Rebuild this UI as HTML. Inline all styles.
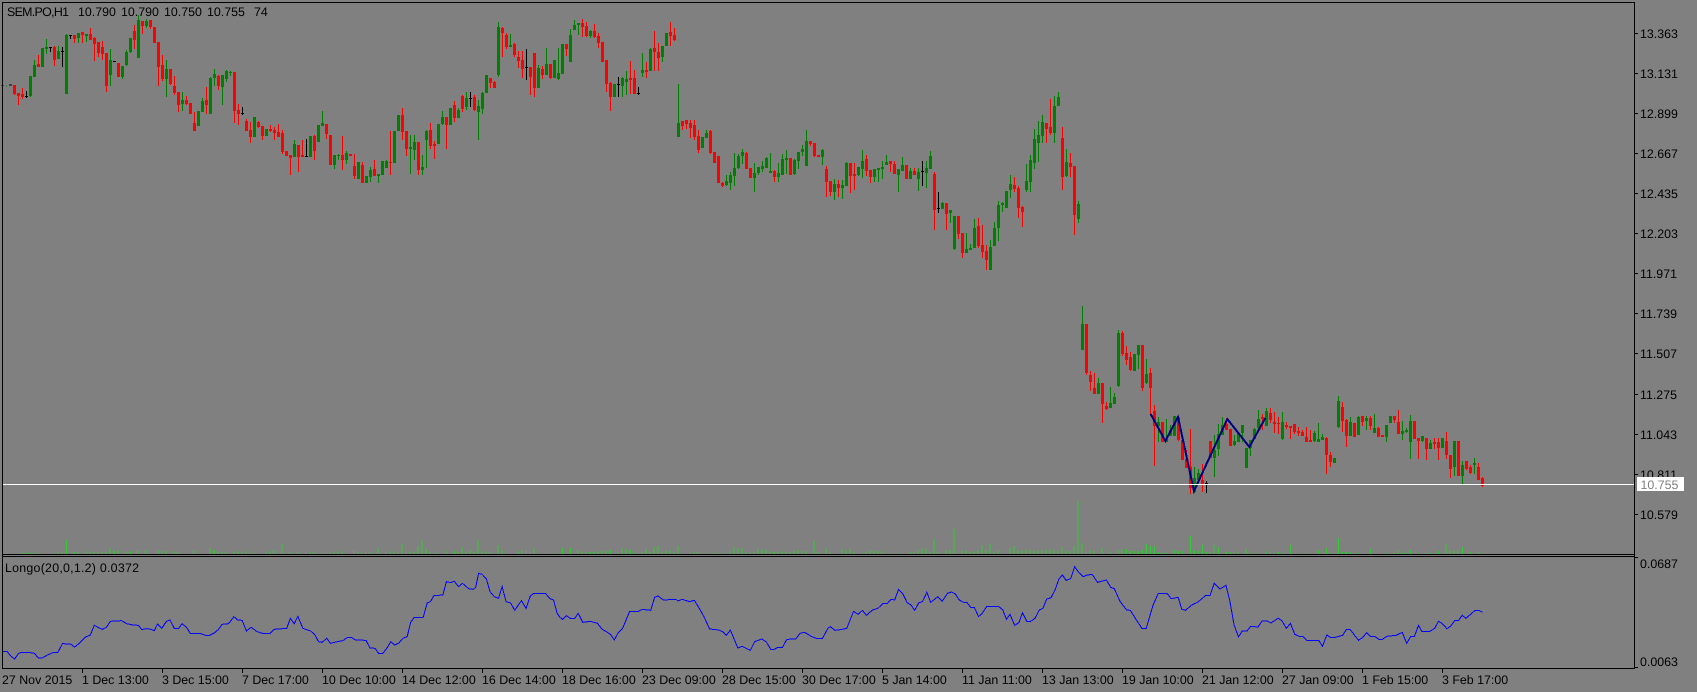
<!DOCTYPE html>
<html><head><meta charset="utf-8"><title>SEM.PO,H1</title>
<style>
html,body{margin:0;padding:0;background:#808080;width:1697px;height:692px;overflow:hidden}
svg{display:block}
text{font-family:"Liberation Sans",sans-serif;font-size:12.4px;fill:#000;text-rendering:geometricPrecision}
.g{stroke:#008000}.r{stroke:#ff0000}.k{stroke:#000}
.w{stroke-width:3;fill:none}.b{stroke-width:9;fill:none}
.nl{fill:none;vector-effect:non-scaling-stroke;stroke-width:1}
</style></head><body>
<svg width="1697" height="692" viewBox="0 0 1697 692" xmlns="http://www.w3.org/2000/svg" shape-rendering="crispEdges">
<rect width="1697" height="692" fill="#808080"/>

<!-- volumes -->
<g stroke="#32cd32">
<path class="nl" stroke="#32cd32" transform="translate(0,554) scale(.35714,1)" d="M62 0v-2M74 0v-1M85 0v-1M96 0v-1M107 0v-1M151 0v-1M163 0v-1M174 0v-2M186 0v-14M208 0v-2M219 0v-2M241 0v-3M252 0v-2M263 0v-2M275 0v-2M286 0v-2M297 0v-2M308 0v-6M320 0v-3M331 0v-4M353 0v-2M365 0v-3M387 0v-4M409 0v-4M443 0v-4M454 0v-3M465 0v-3M487 0v-3M498 0v-2M543 0v-4M588 0v-6M600 0v-4M611 0v-2M622 0v-2M633 0v-2M655 0v-2M666 0v-3M678 0v-2M689 0v-3M700 0v-1M711 0v-1M745 0v-2M756 0v-3M767 0v-4M790 0v-10M812 0v-2M834 0v-2M856 0v-1M868 0v-2M879 0v-2M901 0v-1M912 0v-1M924 0v-1M935 0v-2M946 0v-3M957 0v-2M990 0v-4M1002 0v-2M1013 0v-1M1024 0v-2M1036 0v-2M1058 0v-6M1080 0v-2M1092 0v-3M1103 0v-2M1114 0v-1M1125 0v-10M1136 0v-3M1148 0v-3M1159 0v-2M1170 0v-8M1182 0v-14M1193 0v-5M1204 0v-2M1215 0v-1M1226 0v-1M1249 0v-3M1272 0v-3M1283 0v-2M1294 0v-7M1305 0v-2M1316 0v-4M1327 0v-2M1338 0v-14M1349 0v-3M1361 0v-2M1372 0v-2M1394 0v-9M1405 0v-4M1416 0v-1M1450 0v-3M1461 0v-4M1472 0v-4M1483 0v-2M1495 0v-6M1540 0v-1M1562 0v-1"/>
<path class="nl" stroke="#32cd32" transform="translate(560,554) scale(.35714,1)" d="M7 0v-6M29 0v-6M51 0v-4M62 0v-2M73 0v-2M85 0v-2M96 0v-2M107 0v-3M118 0v-3M129 0v-3M141 0v-4M163 0v-1M174 0v-6M185 0v-5M197 0v-4M208 0v-1M230 0v-2M241 0v-5M252 0v-2M263 0v-7M275 0v-8M286 0v-2M297 0v-3M308 0v-4M319 0v-2M331 0v-8M364 0v-1M375 0v-2M387 0v-2M420 0v-1M431 0v-1M442 0v-1M453 0v-1M476 0v-3M487 0v-7M498 0v-6M510 0v-6M521 0v-2M532 0v-1M543 0v-2M554 0v-5M566 0v-5M577 0v-4M588 0v-3M600 0v-2M611 0v-2M622 0v-3M633 0v-2M644 0v-2M655 0v-3M667 0v-4M678 0v-3M689 0v-3M711 0v-13M722 0v-2M745 0v-6M756 0v-1M790 0v-5M801 0v-3M812 0v-5M823 0v-2M845 0v-1M857 0v-2M868 0v-4M879 0v-3M890 0v-3M901 0v-3M924 0v-1M947 0v-1M980 0v-2M991 0v-2M1003 0v-4M1014 0v-6M1025 0v-5M1036 0v-2M1047 0v-15M1059 0v-2M1081 0v-4M1092 0v-4M1103 0v-25M1125 0v-4M1137 0v-3M1148 0v-2M1159 0v-3M1170 0v-4M1182 0v-9M1193 0v-4M1204 0v-10M1215 0v-2M1227 0v-4M1260 0v-6M1271 0v-8M1282 0v-4M1293 0v-3M1305 0v-5M1316 0v-4M1327 0v-4M1338 0v-3M1349 0v-4M1361 0v-4M1372 0v-5M1383 0v-4M1394 0v-3M1405 0v-7M1417 0v-3M1428 0v-3M1439 0v-8M1450 0v-53M1461 0v-11M1472 0v-3M1484 0v-4M1495 0v-3M1517 0v-6M1540 0v-3M1562 0v-4"/>
<path class="nl" stroke="#32cd32" transform="translate(1120,554) scale(.36805,1)" d="M5 0v-5M17 0v-5M28 0v-3M40 0v-3M50 0v-3M61 0v-4M72 0v-10M83 0v-8M94 0v-8M105 0v-2M116 0v-1M127 0v-1M148 0v-4M159 0v-3M170 0v-3M191 0v-18M202 0v-4M213 0v-3M224 0v-9M235 0v-2M245 0v-2M256 0v-9M267 0v-7M289 0v-2M300 0v-2M310 0v-1M321 0v-2M343 0v-5M354 0v-1M375 0v-1M397 0v-3M408 0v-1M419 0v-1M430 0v-2M441 0v-1M463 0v-9M506 0v-1M539 0v-4M561 0v-6M572 0v-1M593 0v-16M604 0v-2M615 0v-2M626 0v-2M648 0v-1M680 0v-5M724 0v-1M745 0v-1M756 0v-4M767 0v-1M778 0v-1M789 0v-4M811 0v-1M832 0v-1M843 0v-1M865 0v-3M886 0v-10M897 0v-4M908 0v-3M919 0v-3M930 0v-7M952 0v-2M973 0v-2M984 0v-1"/>
</g>

<!-- candles chunk A -->
<g transform="translate(0,0) scale(.333333)">
<path class="g w" d="M7.5 255V272M19.5 257V260M91.5 228V291M103.5 180V231M127.5 144V201M139.5 117V162M175.5 138V177M199.5 102V282M235.5 99V129M259.5 102V126M331.5 147V258M367.5 198V237M379.5 150V198M391.5 114V159M415.5 45V174M439.5 57V84M499.5 180V291M547.5 276V333M595.5 333V378M607.5 294V336M631.5 231V342M643.5 207V258M667.5 225V315M679.5 210V246M691.5 213V228M763.5 351V411M799.5 387V408M883.5 420V471M931.5 408V471M955.5 375V426M967.5 333V378M1003.5 465V507M1015.5 462V480M1039.5 453V492M1075.5 486V537M1099.5 528V549M1111.5 501V546M1135.5 522V549M1147.5 483V525M1159.5 480V504M1183.5 393V489M1195.5 345V393M1231.5 405V522M1243.5 405V480"/>
<path class="g b" d="M7.5 255V258M91.5 228V288M103.5 195V231M127.5 144V201M139.5 141V147M175.5 153V177M199.5 105V282M235.5 99V114M259.5 102V108M331.5 180V225M367.5 198V231M379.5 156V195M391.5 114V156M415.5 60V174M439.5 63V78M499.5 207V237M547.5 300V312M595.5 333V378M607.5 303V336M631.5 234V342M643.5 222V234M667.5 225V261M679.5 213V237M691.5 216V219M763.5 351V411M799.5 387V408M883.5 432V471M931.5 408V471M955.5 375V426M967.5 369V378M1003.5 465V495M1015.5 465V468M1039.5 459V480M1075.5 486V537M1099.5 528V549M1111.5 510V531M1135.5 522V528M1147.5 483V525M1159.5 483V504M1183.5 393V489M1195.5 345V393M1231.5 441V447M1243.5 426V450"/>
<path class="r w" d="M43.5 255V285M55.5 279V315M67.5 264V297M115.5 165V201M163.5 138V198M223.5 105V129M247.5 96V129M271.5 84V120M283.5 111V183M295.5 126V171M307.5 123V180M319.5 159V276M355.5 189V231M403.5 75V147M427.5 63V102M451.5 60V87M463.5 81V129M475.5 126V258M487.5 165V243M511.5 207V255M523.5 228V285M535.5 276V336M559.5 288V315M571.5 309V342M583.5 336V393M619.5 261V342M655.5 225V270M703.5 216V369M715.5 312V375M739.5 357V393M751.5 366V429M775.5 363V384M787.5 378V420M811.5 375V396M823.5 381V420M835.5 372V411M847.5 390V462M859.5 453V468M871.5 465V525M895.5 435V516M907.5 420V471M943.5 405V480M979.5 372V417M991.5 405V495M1027.5 408V510M1051.5 462V468M1063.5 462V537M1087.5 486V549M1123.5 480V528M1171.5 393V525M1207.5 324V420M1219.5 393V468M1255.5 426V525"/>
<path class="r b" d="M43.5 255V282M55.5 279V288M67.5 282V291M115.5 192V201M163.5 141V180M223.5 105V117M247.5 96V105M271.5 102V120M283.5 114V132M295.5 126V159M307.5 141V162M319.5 159V258M355.5 189V231M403.5 93V120M427.5 63V78M451.5 60V81M463.5 81V129M475.5 126V201M487.5 195V237M511.5 207V252M523.5 258V279M535.5 276V315M559.5 300V312M571.5 309V342M583.5 369V393M619.5 300V315M655.5 228V258M703.5 216V333M715.5 330V342M739.5 363V393M751.5 390V411M775.5 366V381M787.5 378V408M811.5 387V393M823.5 390V399M835.5 396V411M847.5 399V456M859.5 453V468M871.5 465V474M895.5 435V471M907.5 465V471M943.5 408V453M979.5 372V402M991.5 405V495M1027.5 465V480M1051.5 462V468M1063.5 498V528M1087.5 495V549M1123.5 507V528M1171.5 486V489M1207.5 345V396M1219.5 393V447M1255.5 426V510"/>
<path class="k w" d="M31.5 253V256M79.5 273V294M151.5 141V156M187.5 141V201M211.5 105V117M343.5 183V186M727.5 321V345M919.5 417V471"/>
<path class="k b" d="M31.5 253V256M79.5 288V291M151.5 141V144M187.5 153V156M211.5 105V108M343.5 183V186M727.5 339V342M919.5 468V471"/>
</g>

<!-- candles chunk B -->
<g transform="translate(420,0) scale(.333333)">
<path class="g w" d="M7.5 465V525M19.5 390V504M55.5 372V432M67.5 333V375M91.5 324V375M115.5 324V354M139.5 276V330M175.5 300V420M187.5 276V342M199.5 225V279M235.5 66V231M271.5 102V141M355.5 195V264M379.5 144V225M403.5 180V234M415.5 144V240M427.5 132V222M451.5 87V186M463.5 60V90M475.5 69V105M511.5 90V114M583.5 252V291M607.5 231V291M619.5 213V285M667.5 159V231M691.5 144V213M727.5 138V186M739.5 99V138M775.5 252V411M847.5 411V444M859.5 390V414M919.5 525V558M931.5 516V570M943.5 459V558M955.5 462V507M967.5 447V492M1003.5 489V576M1015.5 501V525M1027.5 483V516M1039.5 471V504M1051.5 459V519M1075.5 489V546M1087.5 462V525M1099.5 450V522M1123.5 477V525M1135.5 456V507M1147.5 435V468M1159.5 390V498M1207.5 447V495M1243.5 537V600"/>
<path class="g b" d="M7.5 501V510M19.5 393V420M55.5 372V432M67.5 351V372M91.5 324V375M115.5 330V354M139.5 294V321M175.5 318V336M187.5 279V327M199.5 225V279M235.5 81V225M271.5 135V141M355.5 204V264M379.5 192V225M403.5 180V234M415.5 219V237M427.5 132V222M451.5 105V186M463.5 75V90M475.5 69V75M511.5 93V108M583.5 252V291M607.5 234V258M619.5 237V246M667.5 210V219M691.5 147V213M727.5 138V171M739.5 99V138M775.5 369V411M847.5 411V444M859.5 399V414M919.5 543V555M931.5 525V549M943.5 504V528M955.5 468V504M967.5 456V468M1003.5 519V534M1015.5 501V519M1027.5 498V507M1039.5 474V504M1051.5 513V519M1075.5 519V531M1087.5 477V525M1099.5 474V480M1123.5 480V522M1135.5 456V483M1147.5 447V456M1159.5 423V498M1207.5 450V471M1243.5 552V576"/>
<path class="r w" d="M31.5 369V447M43.5 423V477M79.5 351V447M103.5 303V366M127.5 285V336M163.5 285V333M211.5 234V264M223.5 243V264M247.5 81V171M259.5 99V147M283.5 129V171M295.5 153V204M307.5 153V234M331.5 201V285M343.5 159V291M367.5 198V237M391.5 192V237M439.5 132V168M487.5 57V111M499.5 66V111M523.5 72V114M535.5 99V144M547.5 126V186M559.5 180V276M571.5 246V333M631.5 183V282M643.5 210V282M679.5 186V234M703.5 93V213M715.5 129V213M751.5 66V138M763.5 84V123M787.5 363V390M799.5 360V387M811.5 360V414M823.5 360V420M835.5 390V459M871.5 390V462M883.5 456V489M895.5 468V549M907.5 546V561M979.5 456V507M991.5 504V534M1063.5 510V546M1111.5 474V525M1171.5 423V438M1183.5 429V471M1195.5 465V471M1219.5 498V591M1231.5 543V588M1255.5 540V591"/>
<path class="r b" d="M31.5 390V438M43.5 432V438M79.5 351V375M103.5 315V354M127.5 288V327M163.5 291V330M211.5 234V249M223.5 246V264M247.5 84V99M259.5 105V141M283.5 132V165M295.5 171V183M307.5 180V207M331.5 201V231M343.5 159V264M367.5 207V225M391.5 192V234M439.5 132V147M487.5 69V81M499.5 78V108M523.5 93V111M535.5 108V129M547.5 126V186M559.5 180V252M571.5 249V291M631.5 234V240M643.5 234V282M679.5 210V216M703.5 144V156M715.5 156V174M751.5 96V108M763.5 105V120M787.5 363V378M799.5 360V372M811.5 369V384M823.5 375V411M835.5 408V450M871.5 393V459M883.5 456V489M895.5 468V549M907.5 549V558M979.5 459V507M991.5 504V534M1063.5 513V531M1111.5 474V525M1171.5 423V432M1183.5 429V468M1195.5 465V471M1219.5 507V546M1231.5 543V576M1255.5 552V564"/>
<path class="k w" d="M151.5 276V321M319.5 147V240M595.5 231V291M655.5 261V285"/>
<path class="k b" d="M151.5 294V297M319.5 201V204M595.5 252V255M655.5 279V282"/>
</g>

<!-- candles chunk C -->
<g transform="translate(660,80) scale(.333333)">
<path class="g w" d="M547.5 300V357M559.5 246V318M595.5 261V288M607.5 210V294M643.5 267V306M655.5 264V306M667.5 243V297M679.5 225V255M715.5 267V336M727.5 231V273M751.5 264V297M775.5 264V333M799.5 243V324M811.5 213V267M847.5 366V387M871.5 390V429M883.5 408V510M919.5 459V519M931.5 492V510M943.5 417V504M991.5 480V570M1003.5 426V498M1015.5 363V483M1027.5 366V396M1039.5 333V384M1051.5 285V354M1099.5 252V336M1111.5 225V336M1123.5 147V267M1135.5 123V246M1147.5 105V189M1183.5 48V189M1195.5 36V78M1219.5 207V291M1255.5 363V429"/>
<path class="g b" d="M547.5 315V324M559.5 249V318M595.5 261V285M607.5 243V267M643.5 267V291M655.5 264V270M667.5 261V267M679.5 246V255M715.5 267V285M727.5 255V273M751.5 273V297M775.5 276V297M799.5 264V279M811.5 228V267M847.5 369V387M871.5 390V399M883.5 408V507M919.5 507V519M931.5 504V510M943.5 444V504M991.5 501V570M1003.5 444V498M1015.5 375V444M1027.5 369V375M1039.5 333V384M1051.5 312V330M1099.5 303V330M1111.5 240V306M1123.5 177V249M1135.5 165V189M1147.5 126V168M1183.5 78V159M1195.5 51V78M1219.5 246V288M1255.5 372V417"/>
<path class="r w" d="M571.5 249V339M583.5 249V330M619.5 225V288M631.5 270V309M691.5 243V276M703.5 243V282M739.5 255V297M763.5 264V285M823.5 276V450M859.5 369V450M895.5 408V477M907.5 459V534M955.5 414V504M967.5 435V534M979.5 495V570M1063.5 291V336M1075.5 318V414M1087.5 378V441M1159.5 129V189M1171.5 57V165M1207.5 141V330M1231.5 219V291M1243.5 258V465"/>
<path class="r b" d="M571.5 249V288M583.5 282V288M619.5 237V273M631.5 270V291M691.5 243V252M703.5 252V282M739.5 255V297M763.5 273V285M823.5 282V390M859.5 369V402M895.5 408V462M907.5 459V519M955.5 438V498M967.5 495V516M979.5 513V540M1063.5 315V327M1075.5 324V384M1087.5 381V396M1159.5 129V147M1171.5 141V159M1207.5 174V291M1231.5 249V261M1243.5 258V405"/>
<path class="k w" d="M787.5 243V318M835.5 336V399"/>
<path class="k b" d="M787.5 273V276M835.5 384V387"/>
</g>

<!-- candles chunk D -->
<g transform="translate(1060,290) scale(.333333)">
<path class="g w" d="M67.5 48V180M115.5 264V312M151.5 291V354M163.5 309V342M175.5 120V291M223.5 192V243M235.5 165V237M259.5 207V282M295.5 381V456M319.5 387V456M331.5 405V438M343.5 378V438M403.5 531V609M415.5 537V582M463.5 435V561M475.5 402V498M487.5 381V435M523.5 435V468M535.5 429V456M547.5 405V456M559.5 474V534M571.5 450V498M583.5 414V447M595.5 360V420M619.5 354V408M667.5 366V450M763.5 423V456M775.5 399V456M787.5 432V450M823.5 504V519M835.5 318V414M871.5 381V438M895.5 378V435M919.5 378V420M943.5 372V429M979.5 405V456M991.5 378V399M1027.5 393V450M1039.5 414V429M1051.5 375V507M1087.5 438V456M1111.5 450V477M1147.5 444V474M1183.5 453V558M1207.5 513V582M1243.5 504V552"/>
<path class="g b" d="M67.5 102V180M115.5 279V312M151.5 339V354M163.5 321V342M175.5 129V288M223.5 192V243M235.5 165V195M259.5 252V279M295.5 396V408M319.5 447V456M331.5 420V438M343.5 378V438M403.5 564V606M415.5 549V570M463.5 480V504M475.5 432V477M487.5 405V435M523.5 453V465M535.5 429V456M547.5 405V429M559.5 474V534M571.5 450V474M583.5 417V447M595.5 387V414M619.5 363V408M667.5 396V447M763.5 429V453M775.5 447V456M787.5 441V450M823.5 504V519M835.5 333V411M871.5 396V438M895.5 381V435M919.5 384V393M943.5 414V429M979.5 405V441M991.5 378V399M1027.5 423V432M1039.5 420V426M1051.5 393V456M1087.5 438V453M1111.5 459V477M1147.5 444V474M1183.5 453V531M1207.5 525V558M1243.5 519V525"/>
<path class="r w" d="M79.5 102V255M91.5 243V303M103.5 249V312M127.5 279V399M139.5 336V360M187.5 123V198M199.5 168V225M211.5 186V243M247.5 165V303M271.5 234V372M283.5 345V528M307.5 396V456M355.5 381V453M367.5 435V510M379.5 480V534M391.5 417V612M427.5 522V606M451.5 453V504M499.5 384V420M511.5 417V468M607.5 372V420M631.5 354V399M643.5 366V429M655.5 381V432M679.5 396V417M691.5 408V447M703.5 402V432M715.5 411V438M727.5 420V438M739.5 411V456M751.5 420V456M799.5 441V552M811.5 486V531M847.5 336V426M859.5 387V471M883.5 399V441M907.5 378V408M931.5 378V420M955.5 411V441M967.5 435V441M1003.5 378V399M1015.5 360V432M1063.5 393V447M1075.5 444V507M1099.5 444V510M1123.5 444V477M1135.5 444V510M1159.5 426V507M1171.5 495V564M1195.5 453V558M1219.5 513V540M1231.5 525V552M1255.5 519V570"/>
<path class="r b" d="M79.5 102V249M91.5 255V276M103.5 294V312M127.5 279V342M139.5 348V357M187.5 129V192M199.5 189V210M211.5 201V240M247.5 165V294M271.5 249V294M283.5 363V408M307.5 396V456M355.5 381V450M367.5 450V510M379.5 507V534M391.5 530V594M427.5 570V582M451.5 453V504M499.5 402V420M511.5 417V468M607.5 381V387M631.5 369V390M643.5 396V402M655.5 399V402M679.5 405V411M691.5 408V414M703.5 402V426M715.5 423V429M727.5 426V438M739.5 441V456M751.5 450V456M799.5 444V495M811.5 495V516M847.5 351V393M859.5 390V438M883.5 399V441M907.5 378V396M931.5 384V408M955.5 414V441M967.5 435V441M1003.5 378V390M1015.5 396V432M1063.5 393V447M1075.5 444V453M1099.5 444V477M1123.5 456V462M1135.5 456V474M1159.5 453V495M1171.5 495V537M1195.5 453V558M1219.5 513V537M1231.5 531V549M1255.5 531V570"/>
<path class="k w" d="M439.5 573V609"/>
<path class="k b" d="M439.5 579V582"/>
</g>
<!-- final candle -->
<path d="M1482.5 477V487" stroke="#ff0000" stroke-width="1" fill="none"/>
<path d="M1482.5 478V486" stroke="#ff0000" stroke-width="3" fill="none"/>

<!-- zigzag -->
<polyline transform="translate(1060,290) scale(.333333)" fill="none" stroke="#000080" stroke-width="6" points="272,372 316,453 354,381 402,603 502,387 568,471 616,384"/>

<!-- price line -->
<path d="M3 484.5H1634" stroke="#fff" stroke-width="1"/>

<!-- indicator line -->
<polyline class="nl" stroke="#0000ff" transform="translate(0,530) scale(.35714,.333333)" points="8,364 20,364 30,378 41,387 52,370 62,367 80,367 97,370 107,384 118,384 133,375 148,368 162,367 175,341 197,342 209,351 222,340 240,321 253,315 264,286 276,293 287,298 298,292 309,274 340,272 355,281 372,285 388,286 397,299 410,296 420,297 432,302 441,282 453,295 466,274 476,270 488,295 500,295 510,281 522,292 533,310 560,310 576,316 587,316 600,309 612,298 622,283 640,281 655,260 665,270 678,271 690,303 703,292 720,305 735,310 757,310 768,298 803,295 813,265 824,281 834,259 848,295 870,303 882,315 892,335 902,337 915,325 925,340 945,335 960,332 972,323 985,323 995,330 1025,331 1036,354 1050,355 1060,370 1072,370 1085,352 1094,335 1105,345 1117,339 1128,325 1140,320 1150,277 1160,262 1185,262 1196,219 1205,215 1215,197 1240,195 1250,155 1262,158 1272,154 1284,170 1295,160 1312,176 1325,178 1332,172 1340,130 1350,133 1362,147 1372,185 1384,200 1396,205 1406,170 1417,215 1430,219 1441,241 1460,212 1473,235 1485,198 1495,190 1527,190 1540,206 1550,210 1560,250 1568,262"/>
<polyline class="nl" stroke="#0000ff" transform="translate(560,530) scale(.35714,.333333)" points="0,262 7,268 18,257 30,266 41,266 51,250 64,277 85,274 105,280 118,298 130,305 142,314 152,330 163,308 175,296 195,244 220,244 230,238 254,241 265,202 274,198 290,210 325,208 330,213 342,208 363,215 376,211 390,235 403,260 419,297 445,300 457,306 466,316 477,300 498,354 510,349 533,361 545,335 565,327 578,336 590,358 600,358 610,352 623,352 635,328 660,327 672,310 685,307 705,320 720,326 735,325 750,295 757,290 770,301 785,299 803,295 822,244 835,253 847,241 858,256 875,240 890,235 905,220 917,220 927,208 937,210 948,178 960,192 972,218 983,225 993,241 1005,218 1015,215 1027,187 1038,217 1058,200 1070,214 1085,190 1096,186 1107,192 1118,210 1130,217 1140,218 1150,232 1160,232 1172,260 1183,249 1195,229 1228,229 1240,240 1250,268 1260,253 1273,286 1285,278 1295,248 1307,274 1318,274 1330,265 1342,240 1352,235 1363,207 1375,203 1386,180 1397,147 1407,135 1417,151 1430,146 1441,110 1453,128 1465,140 1477,135 1490,133 1505,157 1530,150 1542,172 1552,176 1568,214"/>
<polyline class="nl" stroke="#0000ff" transform="translate(1120,530) scale(.36805,.333333)" points="0,214 18,240 28,241 40,262 60,296 71,296 90,225 104,190 128,190 139,206 158,202 168,238 178,241 195,225 212,216 232,197 245,196 256,160 272,177 288,166 298,210 310,285 322,321 332,303 345,303 355,289 375,291 386,273 400,273 410,279 430,265 440,272 452,295 463,280 475,313 487,319 497,319 507,331 540,331 550,349 562,315 572,322 585,322 605,316 615,298 625,298 648,331 660,322 670,308 680,319 692,319 703,328 713,328 725,319 750,316 767,307 779,340 790,319 800,319 811,286 820,304 842,304 855,295 865,274 875,280 888,296 898,289 910,271 920,271 930,256 940,265 965,241 975,241 985,247"/>

<!-- frames & ticks -->
<g fill="none" stroke="#000" stroke-width="1">
<path d="M2.5 669V2.5H1634.5V669"/>
<path d="M2.5 554.5H1634.5M2.5 556.5H1634.5M2.5 668.5H1634.5"/>
<path d="M1635 33.5h3M1635 73.5h3M1635 113.5h3M1635 153.5h3M1635 193.5h3M1635 233.5h3M1635 273.5h3M1635 313.5h3M1635 353.5h3M1635 394.5h3M1635 434.5h3M1635 474.5h3M1635 514.5h3M1635 557.5h3M1635 667.5h3"/>
<path d="M82.5 669v4M162.5 669v4M242.5 669v4M322.5 669v4M402.5 669v4M482.5 669v4M562.5 669v4M642.5 669v4M722.5 669v4M802.5 669v4M882.5 669v4M962.5 669v4M1042.5 669v4M1122.5 669v4M1202.5 669v4M1282.5 669v4M1362.5 669v4M1442.5 669v4"/>
</g>

<!-- labels -->
<g>
<text x="7" y="16" textLength="62">SEM.PO,H1</text>
<text x="78" y="16">10.790</text>
<text x="121" y="16">10.790</text>
<text x="164" y="16">10.750</text>
<text x="207" y="16">10.755</text>
<text x="254" y="16">74</text>
<text x="5" y="572" textLength="134">Longo(20,0,1.2) 0.0372</text>

<text x="1640" y="38">13.363</text>
<text x="1640" y="78">13.131</text>
<text x="1640" y="118">12.899</text>
<text x="1640" y="158">12.667</text>
<text x="1640" y="198">12.435</text>
<text x="1640" y="238">12.203</text>
<text x="1640" y="278">11.971</text>
<text x="1640" y="318">11.739</text>
<text x="1640" y="358">11.507</text>
<text x="1640" y="399">11.275</text>
<text x="1640" y="439">11.043</text>
<text x="1640" y="479">10.811</text>
<text x="1640" y="519">10.579</text>
<text x="1640" y="568">0.0687</text>
<text x="1640" y="666">0.0063</text>

<text x="2" y="684">27 Nov 2015</text>
<text x="82" y="684">1 Dec 13:00</text>
<text x="162" y="684">3 Dec 15:00</text>
<text x="242" y="684">7 Dec 17:00</text>
<text x="322" y="684">10 Dec 10:00</text>
<text x="402" y="684">14 Dec 12:00</text>
<text x="482" y="684">16 Dec 14:00</text>
<text x="562" y="684">18 Dec 16:00</text>
<text x="642" y="684">23 Dec 09:00</text>
<text x="722" y="684">28 Dec 15:00</text>
<text x="802" y="684">30 Dec 17:00</text>
<text x="882" y="684">5 Jan 14:00</text>
<text x="962" y="684">11 Jan 11:00</text>
<text x="1042" y="684">13 Jan 13:00</text>
<text x="1122" y="684">19 Jan 10:00</text>
<text x="1202" y="684">21 Jan 12:00</text>
<text x="1282" y="684">27 Jan 09:00</text>
<text x="1362" y="684">1 Feb 15:00</text>
<text x="1442" y="684">3 Feb 17:00</text>
</g>

<rect x="1637" y="477" width="47" height="14" fill="#fff"/>
<text x="1640.5" y="489" style="fill:#808080">10.755</text>
</svg>
</body></html>
